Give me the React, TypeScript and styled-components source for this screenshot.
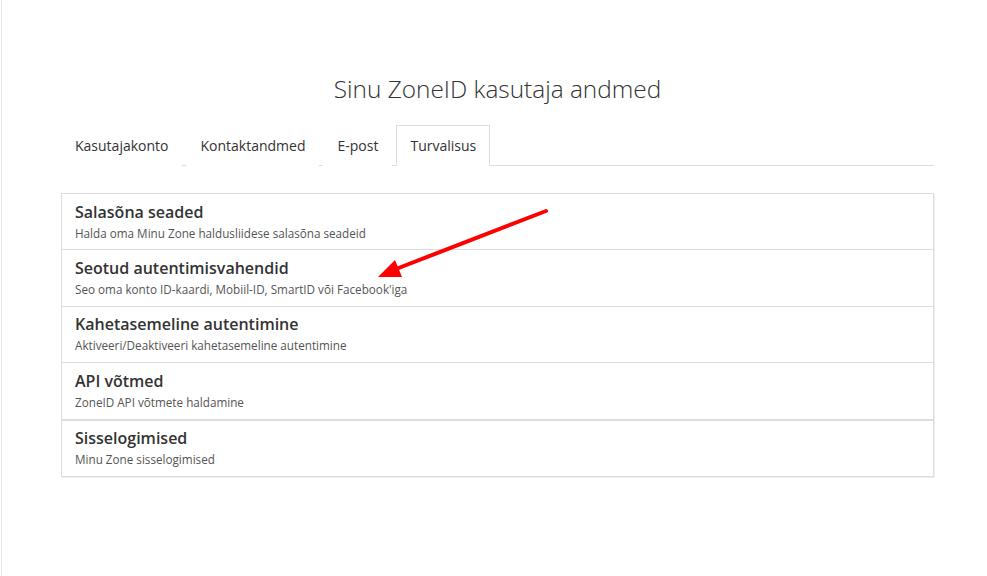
import { FC } from 'react'
import styled, { createGlobalStyle } from 'styled-components'

const GlobalStyle = createGlobalStyle`
  body {
    margin: 0;
    background: #fff;
    font-family: "Open Sans", "Noto Sans", sans-serif;
    color: #333;
  }
`

type Item = {
  title: string
  text: string
}

const items: Item[] = [
  { title: 'Salasõna seaded', text: 'Halda oma Minu Zone haldusliidese salasõna seadeid' },
  { title: 'Seotud autentimisvahendid', text: "Seo oma konto ID-kaardi, Mobiil-ID, SmartID või Facebook'iga" },
  { title: 'Kahetasemeline autentimine', text: 'Aktiveeri/Deaktiveeri kahetasemeline autentimine' },
  { title: 'API võtmed', text: 'ZoneID API võtmete haldamine' },
  { title: 'Sisselogimised', text: 'Minu Zone sisselogimised' },
]

const tabs = ['Kasutajakonto', 'Kontaktandmed', 'E-post', 'Turvalisus']

const Page = styled.div`
  position: relative;
  min-height: 576px;
  margin-left: 1px;
  border-left: 1px solid #e4e4e4;
  box-sizing: border-box;
  padding-top: 72px;
`

const Container = styled.div`
  width: 873px;
  margin-left: 59px;
`

const Title = styled.h1`
  margin: 0 0 19px;
  font-size: 24.4px;
  line-height: 34px;
  font-weight: 300;
  text-align: center;
  color: #333;
`

const Tabs = styled.ul`
  display: flex;
  margin: 0;
  padding: 0;
  list-style: none;
  border-bottom: 1px solid #ddd;
`

const Tab = styled.li<{ $active?: boolean }>`
  height: 39px;
  line-height: 39px;
  padding: 0 13px;
  margin-right: 4px;
  margin-bottom: -1px;
  font-size: 14px;
  color: #333;
  border: 1px solid ${(p) => (p.$active ? '#ddd' : 'transparent')};
  border-bottom-color: ${(p) => (p.$active ? '#fff' : 'transparent')};
  background: #fff;
  cursor: pointer;
`

const List = styled.div`
  margin-top: 27px;
  border: 1px solid #ddd;
  box-shadow: 1px 1px 0 #eee;
`

const Row = styled.div<{ $thick?: boolean }>`
  padding: 6.5px 13px 8.9px;
  border-top: ${(p) => (p.$thick ? '2px solid #ddd' : '1px solid #ddd')};
  &:first-child {
    border-top: none;
  }
`

const RowTitle = styled.h4`
  margin: 0 0 2px;
  font-size: 16px;
  line-height: 22px;
  font-weight: 600;
  color: #333;
`

const RowText = styled.p`
  margin: 0;
  font-size: 11.7px;
  line-height: 16px;
  color: #555;
`

const Arrow = styled.svg`
  position: absolute;
  left: -2px;
  top: 0;
  pointer-events: none;
`

const App: FC = () => {
  return (
    <Page>
      <GlobalStyle />
      <Container>
        <Title>Sinu ZoneID kasutaja andmed</Title>
        <Tabs>
          {tabs.map((t) => (
            <Tab key={t} $active={t === 'Turvalisus'}>{t}</Tab>
          ))}
        </Tabs>
        <List>
          {items.map((it, i) => (
            <Row key={it.title} $thick={i === 4}>
              <RowTitle>{it.title}</RowTitle>
              <RowText>{it.text}</RowText>
            </Row>
          ))}
        </List>
      </Container>
      <Arrow width="987" height="576" viewBox="0 0 987 576">
        <line x1="546" y1="211" x2="396" y2="269" stroke="#f00" strokeWidth="4" strokeLinecap="round" />
        <polygon points="378,277 395,260 402,277" fill="#f00" />
      </Arrow>
    </Page>
  )
}

export default App
